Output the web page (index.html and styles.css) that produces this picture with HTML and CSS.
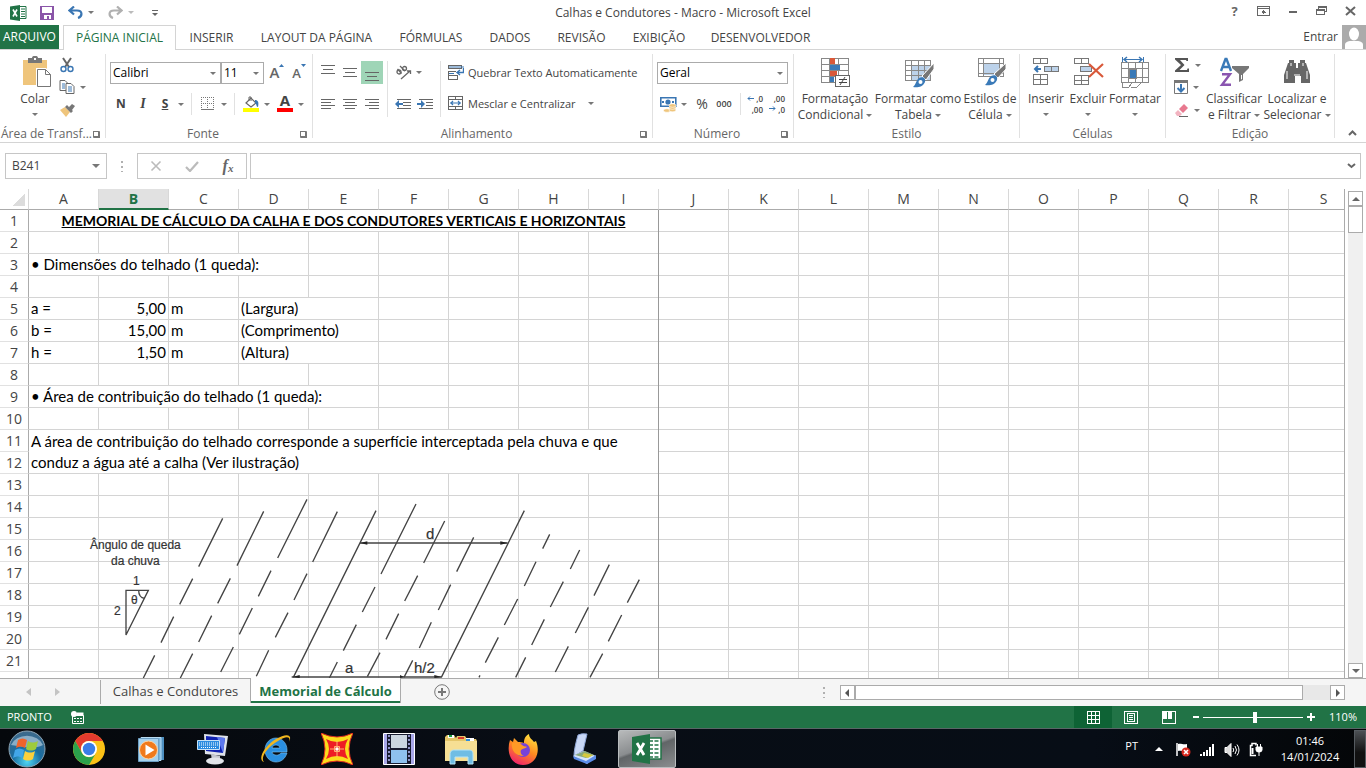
FILE: index.html
```html
<!DOCTYPE html>
<html lang="pt-BR">
<head>
<meta charset="utf-8">
<title>Calhas e Condutores - Macro - Microsoft Excel</title>
<link rel="stylesheet" href="styles.css">
</head>
<body>
<div class="app">
<header class="titlebar">
  <div class="quick">
    <svg class="q-logo" width="18" height="16" viewBox="0 0 18 16"><path d="M9 1.500h7v12H9z" fill="#fff" stroke="#217346"/><path d="M11 4h4M11 6.500h4M11 9h4M11 11.500h4" stroke="#217346"/><path d="M0 1.500L10 0v16L0 14.500z" fill="#217346"/><path d="M3 4.500l4 7M7 4.500l-4 7" stroke="#fff" stroke-width="1.600"/></svg>
    <button class="q-btn" aria-label="Salvar"><svg width="14" height="14" viewBox="0 0 14 14" shape-rendering="crispEdges"><path d="M0 0h14v14H0z" fill="#8a55a8"/><path d="M3 1h9v6H2V1zM4 9h7v4H9v-3H7v3H4z" fill="#fff"/></svg></button>
    <button class="q-btn wide" aria-label="Desfazer"><svg width="15" height="13" viewBox="0 0 15 13" fill="none" stroke="#3a76b3" stroke-width="2.200"><path d="M6 0.500L1.500 4.500L6 8.500M2 4.500h7c6 0 5.500 6 1 7.500"/></svg><i class="caret"></i></button>
    <button class="q-btn wide" aria-label="Refazer"><svg width="15" height="13" viewBox="0 0 15 13" fill="none" stroke="#b0b0b0" stroke-width="2.200"><path d="M9 0.500L13.500 4.500L9 8.500M13 4.500H6c-6 0-5.500 6-1 7.500"/></svg><i class="caret pale"></i></button>
    <button class="q-btn" aria-label="Personalizar"><i class="bar-caret"></i></button>
  </div>
  <h1 class="title">Calhas e Condutores - Macro - Microsoft Excel</h1>
  <div class="winbtns">
    <button class="help" aria-label="Ajuda">?</button>
    <button aria-label="Opções da faixa"><svg width="13" height="10" viewBox="0 0 13 10" fill="none" stroke="#666" shape-rendering="crispEdges"><path d="M.5.5h12v9H.5zM.5 2.500h12M6.500 4v4M4.500 6h1v-1h2v1h1"/></svg></button>
    <button aria-label="Minimizar"><svg width="10" height="10"><path d="M1 5h8v2H1z" fill="#666"/></svg></button>
    <button aria-label="Restaurar"><svg width="11" height="10" viewBox="0 0 11 10" fill="none" stroke="#666" shape-rendering="crispEdges"><path d="M2.500 3V.5h8v5H8.500M2.500 1.500h8M.5 3.500h8v5h-8zM.5 4.500h8"/></svg></button>
    <button aria-label="Fechar"><svg width="11" height="10" viewBox="0 0 11 10"><path d="M1 1l9 8M10 1L1 9" stroke="#666" stroke-width="2"/></svg></button>
  </div>
</header>

<div class="tabs-row">
  <nav class="tabs">
    <button class="file">ARQUIVO</button>
    <button class="on">PÁGINA INICIAL</button>
    <button>INSERIR</button>
    <button>LAYOUT DA PÁGINA</button>
    <button>FÓRMULAS</button>
    <button>DADOS</button>
    <button>REVISÃO</button>
    <button>EXIBIÇÃO</button>
    <button>DESENVOLVEDOR</button>
  </nav>
  <a class="signin" href="#">Entrar</a>
  <svg class="avatar" width="24" height="24" viewBox="0 0 24 24"><path d="M0 0h24v24H0z" fill="#ababab"/><ellipse cx="12" cy="9" rx="5" ry="6.500" fill="#fff"/><path d="M3 24v-4c0-3 3-4 6-4h6c3 0 6 1 6 4v4z" fill="#fff"/></svg>
</div>

<section class="ribbon">
  <div class="group g-clip">
    <div class="body">
      <button class="big"><svg width="32" height="32" viewBox="0 0 32 32"><path d="M4 4h24v25H4z" fill="#efc57c"/><path d="M9 2h4c0-3 6-3 6 0h4v5H9z" fill="#777"/><path d="M15 2h2v2h-2z" fill="#fff"/><path d="M17 12h10l5 5v15H17z" fill="#fff"/><path d="M18.500 13.500h8l5 5v12h-13zM26.500 13.500v5h5" fill="#fff" stroke="#777"/></svg><span>Colar</span><i class="caret"></i></button>
      <div class="stack">
        <button aria-label="Recortar"><svg width="16" height="16" viewBox="0 0 16 16" fill="none"><path d="M4 1l6 9M12 1L6 10" stroke="#666" stroke-width="2"/><circle cx="4.500" cy="12" r="2.500" stroke="#3a76b3" stroke-width="1.400"/><circle cx="11.500" cy="12" r="2.500" stroke="#3a76b3" stroke-width="1.400"/></svg></button>
        <button aria-label="Copiar"><svg width="16" height="14" viewBox="0 0 16 14"><path d="M1 .5h5l3 3v7H1z" fill="#fff" stroke="#666"/><path d="M7 3.500h5l3 3v7H7z" fill="#fff" stroke="#666"/><path d="M3 4h3M3 6h3M3 8h3M9 7h4M9 9h4M9 11h4" stroke="#3a76b3"/></svg><i class="caret"></i></button>
        <button aria-label="Pincel"><svg width="16" height="15" viewBox="0 0 16 15"><path d="M1 7l5-3 5 5-4 5z" fill="#efc57c"/><path d="M6 4l2-2 6 6-2 2zM10 4l3-3 3 2-3 4z" fill="#777"/></svg></button>
      </div>
    </div>
    <div class="cap"><span>Área de Transf...</span><button class="launch" aria-label="Mais"></button></div>
  </div>

  <div class="group g-font">
    <div class="body rows">
      <div class="row">
        <label class="combo c-font"><select aria-label="Fonte"><option>Calibri</option></select></label>
        <label class="combo c-size"><select aria-label="Tamanho"><option>11</option></select></label>
        <button class="ib grow-a" aria-label="Aumentar fonte"><span class="ga">A</span><svg width="5" height="3"><path d="M0 3l2.500-3L5 3z" fill="#3a76b3"/></svg></button>
        <button class="ib grow-a" aria-label="Diminuir fonte"><span class="gs">A</span><svg width="5" height="3"><path d="M0 0h5L2.500 3z" fill="#3a76b3"/></svg></button>
      </div>
      <div class="row r2">
        <button class="ib bold">N</button><button class="ib ital">I</button><button class="ib und">S</button><button class="dd" aria-label="Mais"><i class="caret"></i></button>
        <i class="vs"></i>
        <button class="ib" aria-label="Bordas"><svg width="14" height="14" viewBox="0 0 14 14" stroke="#777" shape-rendering="crispEdges"><path d="M.5 0v12M6.500 0v12M12.500 0v12M0 .5h13M0 6.500h13" stroke-dasharray="1 1"/><path d="M0 12.500h13"/></svg></button><button class="dd" aria-label="Mais"><i class="caret"></i></button>
        <i class="vs"></i>
        <button class="ib" aria-label="Preenchimento"><svg width="17" height="16" viewBox="0 0 17 16"><path d="M3 7l5-5 5 5-5 4z" fill="#fff" stroke="#666" stroke-width="1.200"/><path d="M6 5V1h2v4" fill="none" stroke="#666"/><path d="M12 4c3 0 4 2 3 7-2 0-1-3-3-4z" fill="#3a76b3"/><path d="M0 12h16v4H0z" fill="#ff0"/></svg></button><button class="dd" aria-label="Mais"><i class="caret"></i></button>
        <button class="ib fc" aria-label="Cor da fonte"><span>A</span></button><button class="dd" aria-label="Mais"><i class="caret"></i></button>
      </div>
    </div>
    <div class="cap"><span>Fonte</span><button class="launch" aria-label="Mais"></button></div>
  </div>

  <div class="group g-align">
    <div class="body aligns">
      <div class="a3">
        <button class="ib" aria-label="Superior"><svg class="ln" width="14" height="19"><path d="M0 2.500h14M2 6.500h10M0 10.500h14"/></svg></button>
        <button class="ib" aria-label="Meio"><svg class="ln" width="14" height="19"><path d="M0 5.500h14M2 9.500h10M0 13.500h14"/></svg></button>
        <button class="ib sel" aria-label="Inferior"><svg class="ln" width="14" height="19"><path d="M0 9.500h14M2 13.500h10M0 17.500h14"/></svg></button>
        <button class="ib" aria-label="Esquerda"><svg class="ln" width="14" height="11"><path d="M0 1.500h14M0 4.500h10M0 7.500h14M0 10.500h10"/></svg></button>
        <button class="ib" aria-label="Centro"><svg class="ln" width="14" height="11"><path d="M0 1.500h14M2 4.500h10M0 7.500h14M2 10.500h10"/></svg></button>
        <button class="ib" aria-label="Direita"><svg class="ln" width="14" height="11"><path d="M0 1.500h14M4 4.500h10M0 7.500h14M4 10.500h10"/></svg></button>
      </div>
      <i class="vs tall"></i>
      <div class="a2">
        <button class="ib" aria-label="Orientação"><svg width="17" height="15" viewBox="0 0 17 15" fill="none" stroke="#666" stroke-width="1.300"><circle cx="4" cy="7" r="2"/><path d="M2.500 4l4 4.500"/><path d="M5 1l5 5"/><circle cx="9.500" cy="3.500" r="2"/><path d="M6 14l9-8M12 6h3.500v3"/></svg></button>
        <button class="dd" aria-label="Mais"><i class="caret"></i></button>
        <button class="ib" aria-label="Diminuir recuo"><svg width="16" height="11" viewBox="0 0 16 11"><path d="M2 1.500h14M8 4.500h8M8 7.500h8M2 10.500h14" stroke="#666" shape-rendering="crispEdges"/><path d="M0 6l4-4v3h4v2H4v3z" fill="#3a76b3"/></svg></button>
        <button class="ib" aria-label="Aumentar recuo"><svg width="16" height="11" viewBox="0 0 16 11"><path d="M2 1.500h14M9 4.500h7M9 7.500h7M2 10.500h14" stroke="#666" shape-rendering="crispEdges"/><path d="M8 6L4 2v3H0v2h4v3z" fill="#3a76b3"/></svg></button>
      </div>
      <i class="vs tall"></i>
      <div class="a1">
        <button class="tb"><svg width="16" height="15" viewBox="0 0 16 15" fill="none"><path d="M.5.5h13v3H.5zM.5 6.500h7M.5 14v-3.500h9V14zM.5 10v-4" stroke="#666" shape-rendering="crispEdges"/><path d="M1 2h15M1 8.500h5" stroke="#3a76b3"/><path d="M15.500 3v4.500H10M12 5l-3 2.500 3 2.500" stroke="#3a76b3" stroke-width="1.400"/></svg>Quebrar Texto Automaticamente</button>
        <button class="tb"><svg width="16" height="15" viewBox="0 0 16 15" fill="none"><path d="M.5.5h14v13H.5zM.5 3.500h14M.5 10.500h14M7.500 0v3M7.500 11v3" stroke="#666" shape-rendering="crispEdges"/><path d="M2 7h11M5 5L3 7l2 2M10 5l2 2-2 2" stroke="#3a76b3" stroke-width="1.200"/></svg>Mesclar e Centralizar<i class="caret far"></i></button>
      </div>
    </div>
    <div class="cap"><span>Alinhamento</span><button class="launch" aria-label="Mais"></button></div>
  </div>

  <div class="group g-num">
    <div class="body rows">
      <div class="row"><label class="combo c-num"><select aria-label="Formato de número"><option>Geral</option></select></label></div>
      <div class="row r2">
        <button class="ib" aria-label="Moeda"><svg width="17" height="17" viewBox="0 0 17 17"><path d="M.8 1.800h15v8.400H.8z" fill="#fff" stroke="#3a76b3" stroke-width="1.600"/><circle cx="8" cy="6" r="2.600" fill="#3a76b3"/><path d="M2 5h2v2H2zM12 5h2v2h-2z" fill="#3a76b3"/><g fill="#efc57c" stroke="#fff" stroke-width=".6"><ellipse cx="7" cy="14.500" rx="3.500" ry="1.800"/><ellipse cx="12.500" cy="14" rx="3.500" ry="1.800"/><ellipse cx="12.500" cy="11.500" rx="3.500" ry="1.800"/><ellipse cx="12.500" cy="9.500" rx="3.500" ry="1.800"/></g></svg></button>
        <button class="dd" aria-label="Mais"><i class="caret"></i></button>
        <button class="ib pct">%</button><button class="ib mil">000</button>
        <i class="vs"></i>
        <button class="ib dec" aria-label="Aumentar casas"><span>,0</span><span>,00</span><svg width="7" height="5"><path d="M7 2.500H1M3 .5l-2 2 2 2" fill="none" stroke="#3a76b3"/></svg></button>
        <button class="ib dec d2" aria-label="Diminuir casas"><span>,00</span><span>,0</span><svg width="7" height="5"><path d="M0 2.500h6M4 .5l2 2-2 2" fill="none" stroke="#3a76b3"/></svg></button>
      </div>
    </div>
    <div class="cap"><span>Número</span><button class="launch" aria-label="Mais"></button></div>
  </div>

  <div class="group g-style">
    <div class="body">
      <button class="big"><svg width="32" height="32" viewBox="0 0 32 32" shape-rendering="crispEdges"><path d="M2.500 2.500h27v24h-27zM10.500 2v24M19.500 2v24M2 8.500h27M2 14.500h27M2 20.500h27" fill="#fff" stroke="#888"/><path d="M11 2h5v6h-5zM11 15h7v5h-7z" fill="#d9593a"/><path d="M11 9h10v5H11zM11 21h4v5h-4z" fill="#3a7ab8"/><path d="M16.500 19.500h14v11h-14z" fill="#fff" stroke="#666"/><path d="M20 23.500h8M20 26.500h8M21 29l5-8" stroke="#444" shape-rendering="auto"/></svg><span>Formatação<br>Condicional <i class="caret"></i></span></button>
      <button class="big"><svg width="32" height="32" viewBox="0 0 32 32"><path d="M3.500 4.500h25v20h-25z" fill="#fff"/><path d="M9 9h19v15H9z" fill="#bcd2ea"/><path d="M3.500 4.500h25v20h-25zM9.500 4v20M16.500 4v20M22.500 4v20M3 9.500h25M3 14.500h25M3 19.500h25" fill="none" stroke="#888" shape-rendering="crispEdges"/><path d="M32 7L20 20l4 4 8-11z" fill="#777" stroke="#fff"/><path d="M17 22c4-2 7 0 6 4-2 5-8 6-12 5 3-2 3-7 6-9z" fill="#3a7ab8"/><circle cx="18.500" cy="26" r="2" fill="#fff"/></svg><span>Formatar como<br>Tabela <i class="caret"></i></span></button>
      <button class="big"><svg width="32" height="32" viewBox="0 0 32 32"><path d="M4 2.500h25v18H4z" fill="#fff"/><path d="M9 8h16v11H9z" fill="#bcd2ea"/><path d="M4.500 2.500h25v18h-25zM9.500 2v18M25.500 2v18M4 7.500h25M4 17.500h25" fill="none" stroke="#888" shape-rendering="crispEdges"/><path d="M32 7L20 18l4 4 8-9z" fill="#777" stroke="#fff"/><path d="M17 20c4-2 7 0 6 4-2 5-8 6-12 5 3-2 3-7 6-9z" fill="#3a7ab8"/><circle cx="18.500" cy="24" r="2" fill="#fff"/></svg><span>Estilos de<br>Célula <i class="caret"></i></span></button>
    </div>
    <div class="cap"><span>Estilo</span></div>
  </div>

  <div class="group g-cells">
    <div class="body">
      <button class="big"><svg width="32" height="32" viewBox="0 0 32 32" fill="none" stroke="#777" shape-rendering="crispEdges"><path d="M3.500 2.500h14v5h-14zM10.500 2v5M3.500 18.500h14v10h-14zM10.500 18v10M3 23.500h14"/><path d="M14.500 10.500h14v5h-14z" fill="#bcd2ea"/><path d="M21.500 10v5"/><path d="M11 13H5M8 10l-3 3 3 3" stroke="#3a76b3" stroke-width="2" shape-rendering="auto"/></svg><span>Inserir</span><i class="caret"></i></button>
      <button class="big"><svg width="32" height="32" viewBox="0 0 32 32" fill="none" stroke="#777" shape-rendering="crispEdges"><path d="M2.500 2.500h14v5h-14zM9.500 2v5M2.500 19.500h14v9h-14zM9.500 19v9M2 24.500h14"/><path d="M8.500 10.500h11v5h-11z" fill="#bcd2ea"/><path d="M17 8l14 13M31 8L17 21" stroke="#d9593a" stroke-width="2.200" shape-rendering="auto"/></svg><span>Excluir</span><i class="caret"></i></button>
      <button class="big"><svg width="32" height="32" viewBox="0 0 32 32" fill="none" stroke="#888" shape-rendering="crispEdges"><path d="M2.500 6.500h27v20h-27zM9.500 6v20M16.500 6v20M23.500 6v20M2 12.500h27M2 21.500h27"/><path d="M3 27v4h7l3-4M12 31h6l4-4"/><path d="M10 13h7v9h-7z" fill="#3a7ab8"/><path d="M3.500 1v5M24.500 1v5M5 3.500h18" stroke="#3a76b3"/><path d="M8 1L5 3.500 8 6M20 1l3 2.500L20 6" stroke="#3a76b3" stroke-width="1.500" shape-rendering="auto"/></svg><span>Formatar</span><i class="caret"></i></button>
    </div>
    <div class="cap"><span>Células</span></div>
  </div>

  <div class="group g-edit">
    <div class="body">
      <div class="stack">
        <button aria-label="Soma"><svg width="16" height="16" viewBox="0 0 16 16"><path d="M1 1h13v3h-1.500l-.5-1H6l4.500 5L5.500 13H13l.5-1.500H15V15H1v-1.500L7 8 1 2.500z" fill="#555"/></svg><i class="caret"></i></button>
        <button aria-label="Preencher"><svg width="14" height="16" viewBox="0 0 14 16"><path d="M.5 1.500h13v13H.5z" fill="#fff" stroke="#777"/><path d="M0 1h14v3H0z" fill="#777"/><path d="M7 5v7M3.500 9L7 12.500 10.500 9" fill="none" stroke="#3a76b3" stroke-width="2"/></svg><i class="caret"></i></button>
        <button aria-label="Limpar"><svg width="15" height="14" viewBox="0 0 15 14"><path d="M5 6l5-5 4 4-5 5z" fill="#e8798f"/><path d="M1 10l3-3 4 4-2 2H3z" fill="#f2b3c0"/><path d="M5 13.500h9" stroke="#666"/></svg><i class="caret"></i></button>
      </div>
      <button class="big"><svg width="32" height="32" viewBox="0 0 32 32"><path d="M3 15L7.500 3h1L13 15M5 11h6" fill="none" stroke="#3a7ab8" stroke-width="2.400"/><path d="M4 18.200h8L4 28.800h9" fill="none" stroke="#8a55b0" stroke-width="2.400"/><path d="M14 10h17v2l-6 6v6l-4 2v-8l-7-6z" fill="#777"/><path d="M23 19h1v4l-1 .5z" fill="#fff"/></svg><span>Classificar<br>e Filtrar <i class="caret"></i></span></button>
      <button class="big"><svg width="32" height="32" viewBox="0 0 32 32"><path d="M8 4h5v3h2v5h2V7h2V4h5v3h1l2 6 2 6v8h-9v-7h-6v7H3v-8l2-6 2-6h1z" fill="#666"/><path d="M6 15v8M26 15v8M10 7v3M22 7v3M13 19h6" stroke="#fff"/></svg><span>Localizar e<br>Selecionar <i class="caret"></i></span></button>
    </div>
    <div class="cap"><span>Edição</span></div>
  </div>
  <button class="collapse" aria-label="Recolher"><svg width="9" height="6"><path d="M1 5l3.500-3.500L8 5" fill="none" stroke="#666" stroke-width="2"/></svg></button>
</section>

<div class="fbar">
  <div class="namebox"><input aria-label="Caixa de nome" value="B241"><button aria-label="Nomes"><i class="caret big-c"></i></button></div>
  <i class="dots"></i>
  <div class="fx">
    <button aria-label="Cancelar"><svg width="12" height="12"><path d="M1.500 1.500l9 9M10.500 1.500l-9 9" stroke="#bbb" stroke-width="1.600"/></svg></button>
    <button aria-label="Inserir"><svg width="14" height="11"><path d="M1 6l4 4 8-9" fill="none" stroke="#bbb" stroke-width="2.200"/></svg></button>
    <button class="fxb" aria-label="Inserir função">f<small>x</small></button>
  </div>
  <div class="formula"><input aria-label="Barra de fórmulas"><button aria-label="Expandir"><svg width="9" height="6"><path d="M1 1l3.500 3L8 1" fill="none" stroke="#666" stroke-width="2"/></svg></button></div>
</div>

<main class="sheet">
  <div class="grid-wrap">
    <table class="grid">
      <colgroup><col class="ch"><col span="19"></colgroup>
      <thead><tr><th class="corner"></th><th>A</th><th class="cur">B</th><th>C</th><th>D</th><th>E</th><th>F</th><th>G</th><th>H</th><th>I</th><th>J</th><th>K</th><th>L</th><th>M</th><th>N</th><th>O</th><th>P</th><th>Q</th><th>R</th><th>S</th></tr></thead>
      <tbody>
        <tr><th>1</th><td class="c head" colspan="9">MEMORIAL DE CÁLCULO DA CALHA E DOS CONDUTORES VERTICAIS E HORIZONTAIS</td><td colspan="10"></td></tr>
        <tr><th>2</th><td colspan="19"></td></tr>
        <tr><th>3</th><td class="c" colspan="4">• Dimensões do telhado (1 queda):</td><td colspan="15"></td></tr>
        <tr><th>4</th><td colspan="19"></td></tr>
        <tr><th>5</th><td class="c">a =</td><td class="c num">5,00</td><td class="c">m</td><td class="c" colspan="2">(Largura)</td><td colspan="14"></td></tr>
        <tr><th>6</th><td class="c">b =</td><td class="c num">15,00</td><td class="c">m</td><td class="c" colspan="2">(Comprimento)</td><td colspan="14"></td></tr>
        <tr><th>7</th><td class="c">h =</td><td class="c num">1,50</td><td class="c">m</td><td class="c" colspan="2">(Altura)</td><td colspan="14"></td></tr>
        <tr><th>8</th><td colspan="19"></td></tr>
        <tr><th>9</th><td class="c" colspan="5">• Área de contribuição do telhado (1 queda):</td><td colspan="14"></td></tr>
        <tr><th>10</th><td colspan="19"></td></tr>
        <tr><th>11</th><td class="c" colspan="9" rowspan="2">A área de contribuição do telhado corresponde a superfície interceptada pela chuva e que<br>conduz a água até a calha (Ver ilustração)</td><td colspan="10"></td></tr>
        <tr><th>12</th><td colspan="10"></td></tr>
        <tr><th>13</th><td colspan="19"></td></tr>
        <tr><th>14</th><td colspan="19"></td></tr>
        <tr><th>15</th><td colspan="19"></td></tr>
        <tr><th>16</th><td colspan="19"></td></tr>
        <tr><th>17</th><td colspan="19"></td></tr>
        <tr><th>18</th><td colspan="19"></td></tr>
        <tr><th>19</th><td colspan="19"></td></tr>
        <tr><th>20</th><td colspan="19"></td></tr>
        <tr><th>21</th><td colspan="19"></td></tr>
        <tr><th>22</th><td colspan="19"></td></tr>
      </tbody>
    </table>
    <i class="page-break"></i>
    <svg class="rain" width="610" height="198" viewBox="0 0 610 198">
      <g transform="scale(.33333)" fill="none" stroke="#444" stroke-width="4">
        <path d="M488 115L416 260M611 94L531 257M741 58L653 234M832 95L758 246M948 92L700 592M398 296L359 373M511 295L473 370M633 272L595 349M741 281L702 360M341 410L303 488M455 407L416 486M577 384L538 463M684 398L646 472M284 526L250 594M398 521L361 594M520 501L482 576M626 511L589 589M945 321L907 396M889 434L850 512M832 546L808 594M960 518L922 590"/>
        <path transform="translate(900 0)" d="M168 72L63 282M254 123L191 249M341 172L290 275M493 92L244 592M173 287L134 363M272 314L235 390M116 401L78 478M214 427L178 504M158 541L132 592M569 163L548 206M528 245L493 318M473 357L433 435M415 472L376 548M360 586L357 592M659 210L631 267M610 305L571 381M553 418L515 495M497 532L467 592M748 254L702 347M685 382L646 459M625 499L586 576M838 299L802 368M785 405L745 484M728 521L690 592"/>
        <path d="M900 189h443M695 591h450"/>
        <path d="M198 331h67L198 465zM236 331c0 14 6 23 18 24"/>
        <g fill="#222" stroke="none"><path d="M900 189l22-5v10zM1343 189l-22-5v10zM697 591l22-6v9zM1145 591l-22-6v9zM1032 591l-12-6v9z"/></g>
      </g>
      <g class="rt">
        <text x="30" y="69">Ângulo de queda</text>
        <text x="51" y="85">da chuva</text>
        <text x="73" y="105">1</text>
        <text x="54" y="135">2</text>
        <text x="71" y="124">θ</text>
        <g class="rt-l"><text x="285" y="193">a</text><text x="366" y="59">d</text><text x="354" y="193">h/2</text></g>
      </g>
    </svg>
  </div>
  <div class="vscroll">
    <button aria-label="Para cima"><svg width="8" height="4"><path d="M0 4l4-4 4 4z" fill="#666"/></svg></button>
    <div class="vthumb"></div>
    <div class="vtrack"></div>
    <button aria-label="Para baixo"><svg width="8" height="4"><path d="M0 0h8L4 4z" fill="#666"/></svg></button>
  </div>
</main>

<div class="sheetbar">
  <div class="navs">
    <button aria-label="Anterior"><svg width="5" height="8"><path d="M5 0v8L0 4z" fill="#c4c4c4"/></svg></button>
    <button aria-label="Próxima"><svg width="5" height="8"><path d="M0 0v8l5-4z" fill="#c4c4c4"/></svg></button>
  </div>
  <button class="stab">Calhas e Condutores</button>
  <button class="stab on">Memorial de Cálculo</button>
  <button class="add" aria-label="Nova planilha"><svg width="16" height="16" fill="none" stroke="#777"><circle cx="8" cy="8" r="7.300"/><path d="M4 8h8M8 4v8" stroke-width="2"/></svg></button>
  <i class="dots hd"></i>
  <div class="hscroll">
    <button aria-label="Esquerda"><svg width="4" height="8"><path d="M4 0v8L0 4z" fill="#555"/></svg></button>
    <div class="hthumb"></div><div class="htrack"></div>
    <button aria-label="Direita"><svg width="4" height="8"><path d="M0 0v8l4-4z" fill="#555"/></svg></button>
  </div>
</div>

<footer class="status">
  <span class="ready">PRONTO</span>
  <svg width="13" height="13" viewBox="0 0 13 13"><path d="M1.500 4.500h11v8h-11z" fill="none" stroke="#fff"/><path d="M6 1.500h6.500V5H6z" fill="#fff"/><path d="M3 7.500h8M3 10.500h8" stroke="#fff" stroke-dasharray="2 1"/><circle cx="3" cy="3" r="3" fill="#fff"/></svg>
  <div class="views">
    <button class="on" aria-label="Normal"><svg width="13" height="13" fill="none" stroke="#fff" shape-rendering="crispEdges"><path d="M.5.5h12v12H.5zM4.500 0v13M8.500 0v13M0 4.500h13M0 8.500h13"/></svg></button>
    <button aria-label="Layout da página"><svg width="14" height="13" fill="none" stroke="#fff" shape-rendering="crispEdges"><path d="M.5.5h13v12H.5zM3.500 2.500h7v8h-7zM5 4.500h4M5 6.500h4M5 8.500h4"/></svg></button>
    <button aria-label="Quebra de página"><svg width="14" height="13" shape-rendering="crispEdges"><path d="M.5.5h13v12H.5z" fill="none" stroke="#fff"/><path d="M1 1h4v7H1zM6 1h4v7H6z" fill="#fff"/></svg></button>
  </div>
  <div class="zoom">
    <button class="zm" aria-label="Menos zoom"></button>
    <input type="range" min="0" max="100" value="52" aria-label="Zoom">
    <button class="zm plus" aria-label="Mais zoom"></button>
    <span class="pc">110%</span>
  </div>
</footer>

<div class="taskbar">
  <div class="apps">
    <button aria-label="Iniciar"><svg width="40" height="38" viewBox="0 0 40 38"><defs><radialGradient id="orb" cx=".5" cy=".85" r=".8"><stop offset="0" stop-color="#4fd6f4"/><stop offset=".5" stop-color="#1a6da0"/><stop offset="1" stop-color="#3c6a8c"/></radialGradient></defs><circle cx="20" cy="19" r="18" fill="url(#orb)" stroke="#8fa6b5"/><path d="M4 15a17 14 0 0 1 32 0c-10 5-22 1-32 0z" fill="#d5e4ee" opacity=".55"/><path d="M11 10c3-2 6-2 9 0l-2 8c-3-2-6-2-9 0z" fill="#f0642b"/><path d="M21 11c3 2 6 2 10 0l-2 8c-3 2-7 2-10 0z" fill="#9ecb3c"/><path d="M8 20c3-2 6-2 9 0l-2 8c-3-2-5-2-9 0z" fill="#42a6e8"/><path d="M18 21c3 2 7 2 10 0l-2 8c-3 2-7 2-10 0z" fill="#fcd03c"/></svg></button>
    <button aria-label="Chrome"><svg width="32" height="32" viewBox="0 0 32 32"><circle cx="16" cy="16" r="16" fill="#fbc116"/><path d="M2.200 8A16 16 0 0 1 29.800 8H16a8 8 0 0 0-7 12z" fill="#e33b2e"/><path d="M2.200 8A16 16 0 0 0 16 32l7-12a8 8 0 0 1-14 0z" fill="#2ba24c"/><circle cx="16" cy="16" r="8" fill="#fff"/><circle cx="16" cy="16" r="6.200" fill="#3a7de8"/></svg></button>
    <button aria-label="Media Player"><svg width="32" height="32" viewBox="0 0 32 32"><path d="M9 4h20v23H9z" fill="#4d8fc0"/><path d="M6 4.500h20v23H6z" fill="#78b4dc" stroke="#b8dcf2"/><path d="M3.500 5.500h20v23h-20z" fill="#a6d2ee" stroke="#6c9fc4"/><circle cx="13.500" cy="17" r="9" fill="#f07a1c" stroke="#ffd2a0"/><path d="M10.500 11.500v11l9-5.500z" fill="#fff"/></svg></button>
    <button aria-label="Teclado virtual"><svg width="32" height="32" viewBox="0 0 32 32"><path d="M7 1l24 2-3 20-20-2z" fill="#dfe3ea"/><path d="M9 3l19 2-2 15-17-2z" fill="#1022b0"/><path d="M20 4l8 1-2 15z" fill="#5c78ef"/><path d="M14 21l9 2v5h-8z" fill="#c4c8d0"/><ellipse cx="18" cy="28" rx="9" ry="3.500" fill="#e2e5ea"/><path d="M.5 7.500h22v9H.5z" fill="#2a8ce0" stroke="#c6e2f8"/><path d="M2 10h19M2 12h19M4 14.500h15" stroke="#fff" stroke-dasharray="1 1"/></svg></button>
    <button aria-label="Internet Explorer"><svg width="32" height="32" viewBox="0 0 32 32"><path d="M6 17c0-7 5-12 11-12s11 5 11 12v2H13c1 4 7 4 9 1h6c-2 6-6 9-11 9C11 29 6 24 6 17zm7-2h8c-1-4-7-4-8 0z" fill="#2a8fe0" stroke="#7cc4f4" stroke-width=".6"/><path d="M5 29C-2 27 5 13 17 6 27 0 34 1 30 9c2-6-3-6-11-1C8 14 1 25 5 29z" fill="#f2b71f"/></svg></button>
    <button aria-label="Estrela"><svg width="32" height="32" viewBox="0 0 32 32"><path d="M0 0q16 8 32 0-8 16 0 32-16-8-32 0Q8 16 0 0z" fill="#fbdc1c" stroke="#e22c22"/><path d="M5 6q11 6 22 0-6 10 0 20-11-6-22 0Q11 16 5 6z" fill="#ee1c24"/><path d="M16 8v16M9 16h14M13.500 13.500h5v5h-5z" stroke="#ffb070" stroke-width="1" fill="none"/><path d="M14.500 14.500h3v3h-3z" fill="#fff"/></svg></button>
    <button aria-label="Vídeo"><svg width="32" height="32" viewBox="0 0 32 32"><path d="M.5.5h31v31H.5z" fill="#a9a8ea" stroke="#fff"/><path d="M4 1h24v30H4z" fill="#181c30"/><path d="M8 2h16v13H8z" fill="#cbd6e0"/><path d="M8 17h16v13H8z" fill="#8fc1ee"/><path d="M6 2v28M26 2v28" stroke="#8f93c8" stroke-width="2" stroke-dasharray="2 2"/></svg></button>
    <button aria-label="Explorador"><svg width="34" height="32" viewBox="0 0 34 32"><path d="M1 4l2-2h7l2 3 1-2h8l2 3h9l1 2v20H1z" fill="#e5c669"/><path d="M4 2h6v3H4z" fill="#fff"/><path d="M5 2h3v2H5z" fill="#18a040"/><path d="M14 4h6v2h-6z" fill="#d83a2c"/><path d="M22 5h8v3h-8z" fill="#fff"/><path d="M22 6h4v2h-4z" fill="#2e8fe0"/><path d="M1 8h32v20H1z" fill="#f6df94"/><path d="M6 31v-9c0-5 3-5 5-5h13c4 0 5 1 5 5v9h-5v-7H11v7z" fill="#70bde4" stroke="#b5e4f8"/></svg></button>
    <button aria-label="Firefox"><svg width="32" height="32" viewBox="0 0 32 32"><defs><linearGradient id="ff" x1=".8" y1="0" x2=".3" y2="1"><stop offset="0" stop-color="#ffe640"/><stop offset=".5" stop-color="#ff8a20"/><stop offset="1" stop-color="#f0206c"/></linearGradient></defs><path d="M3 7l3 2 1-4 4 4c2 0 4 0 6 1 0-4 1-7 5-9 0 4 3 5 5 8l2-1c5 12-1 24-13 24S-1 19 3 7z" fill="url(#ff)"/><circle cx="16" cy="17" r="7" fill="#7742d8"/><path d="M5 10c4 0 7-1 10 2 2 2 4 1 5 2-2 2-4 1-6 3-1 2 0 5 3 6-9 0-13-6-12-13z" fill="#ff9a26"/></svg></button>
    <button aria-label="Scanner"><svg width="32" height="32" viewBox="0 0 32 32"><path d="M9 2q4-2 9-1l-4 17-9 5Q5 16 9 2z" fill="#c9d8f6" stroke="#90a8d8"/><path d="M4 23l11-5 12 5-9 8z" fill="#d5e4fb"/><path d="M6 22l10-4 9 4-8 3z" fill="#88a878"/><path d="M15 20l9 2-5 3-6-2z" fill="#d5c83e"/><path d="M4 23l13 5 10-6v4l-9 5L5 26z" fill="#5b8ce8"/></svg></button>
    <button class="active" aria-label="Excel"><svg width="32" height="30" viewBox="0 0 32 30"><path d="M16 4h14v21H16z" fill="#fff" stroke="#217346" stroke-width="1.500"/><path d="M18 7h10M18 11h10M18 15h10M18 19h10M18 23h10" stroke="#217346" stroke-width="1.500" stroke-dasharray="4 1.500"/><path d="M1 3l18-3v30L1 27z" fill="#217346"/><path d="M6 9l7 12M13 9L6 21" stroke="#fff" stroke-width="2.800"/></svg></button>
  </div>
  <div class="tray">
    <span class="lang">PT</span>
    <button class="more" aria-label="Mostrar ícones"><svg width="8" height="4"><path d="M0 4l4-4 4 4z" fill="#fff"/></svg></button>
    <svg width="15" height="15" viewBox="0 0 15 15"><path d="M1 1v13" stroke="#fff" stroke-width="1.500"/><path d="M2 2c3-1 5 1 9 0v7c-4 1-6-1-9 0z" fill="#fff"/><circle cx="10" cy="10" r="4.500" fill="#d8281e"/><path d="M8 8l4 4M12 8l-4 4" stroke="#fff" stroke-width="1.600"/></svg>
    <svg width="15" height="12" viewBox="0 0 15 12" fill="#fff" shape-rendering="crispEdges"><path d="M0 10h2v2H0zM3 8h2v4H3zM6 6h2v6H6zM9 3h2v9H9zM12 0h2v12h-2z"/></svg>
    <svg width="16" height="14" viewBox="0 0 16 14" fill="none" stroke="#fff"><path d="M1 4.500h2l4-4v13l-4-4H1z" fill="#ddd"/><path d="M9 5q1.500 2 0 4M11 3q3 4 0 8M13 1.500q4 5.500 0 11"/></svg>
    <svg width="14" height="15" viewBox="0 0 14 15" fill="none" stroke="#fff"><path d="M7 13.500H1.500v-10H3v-2h4v2" stroke-width="1.500"/><path d="M3.500 6v6" stroke-width="2"/><path d="M7 5h6v3q0 2-3 2t-3-2zM8.500 2v3M11.500 2v3M10 10v4" fill="#fff"/></svg>
    <div class="clock"><span>01:46</span><span>14/01/2024</span></div>
    <button class="peek" aria-label="Área de trabalho"></button>
  </div>
</div>
</div>
</body>
</html>
```
FILE: styles.css
```css
* { box-sizing: border-box; }
body { margin: 0; font: 12px/16px "Open Sans", "Noto Sans", sans-serif; color: #444; background: #fff; }
button, input, select { font: inherit; color: inherit; border: 0; background: none; padding: 0; margin: 0; outline: 0; }
button { display: flex; align-items: center; justify-content: center; white-space: nowrap; }
svg { display: block; flex: none; }
.app { height: 100vh; display: flex; flex-direction: column; overflow: hidden; }

.caret { display: inline-block; width: 0; height: 0; border: 3px solid transparent; border-top-color: #777; border-bottom: 0; vertical-align: 2px; flex: none; }
.caret.pale { border-top-color: #bbb; }
.caret.big-c { border-width: 4px 4px 0; }
.caret.far { margin-left: 8px; }
.bar-caret { border-top: 1px solid #666; width: 6px; padding-top: 2px; }
.bar-caret::after { content: ""; display: block; border: 3px solid transparent; border-top-color: #666; border-bottom: 0; }

.titlebar { display: grid; grid-template-columns: 1fr auto 1fr; align-items: center; height: 25px; flex: none; }
.quick { display: flex; align-items: center; padding-left: 10px; height: 22px; }
.q-logo { margin-right: 12px; }
.q-btn { width: 14px; margin-right: 14px; }
.q-btn.wide { width: 26px; gap: 5px; justify-content: flex-start; }
.title { margin: 0; font-size: 12px; font-weight: 400; }
.winbtns { display: flex; justify-content: flex-end; align-items: center; padding-right: 1px; margin-bottom: 3px; }
.winbtns button { width: 29px; height: 22px; }
.help { font-weight: 700; font-size: 13px; color: #666; }

.tabs-row { display: flex; height: 25px; border-bottom: 1px solid #d4d4d4; flex: none; }
.tabs { display: grid; grid-template-columns: 63px 113px 71px 139px 90px 68px 75px 80px 123px; height: 25px; }
.tabs .file { background: #217346; color: #fff; width: 59px; height: 24px; }
.tabs .on { color: #217346; background: #fff; border: 1px solid #d4d4d4; border-bottom: 0; }
.signin { margin-left: auto; color: #444; text-decoration: none; line-height: 24px; padding-right: 4px; }

.ribbon { display: flex; height: 93px; border-bottom: 1px solid #d4d4d4; flex: none; }
.group { display: flex; flex-direction: column; flex: none; border-right: 1px solid #e1e1e1; margin: 4px 0; }
.g-clip { width: 106px; } .g-font { width: 207px; } .g-align { width: 340px; } .g-num { width: 141px; }
.g-style { width: 226px; } .g-cells { width: 146px; } .g-edit { width: 169px; }
.body { flex: 1; display: grid; align-items: start; min-height: 0; }
.cap { height: 16px; display: grid; grid-template-columns: 1fr 12px; margin-bottom: -4px; text-align: center; color: #666; white-space: nowrap; }
.g-style .cap, .g-cells .cap, .g-edit .cap { grid-template-columns: 1fr; }
.launch { width: 7px; height: 7px; border: 1px solid #777; border-right-color: #bbb; border-bottom-color: #bbb; align-self: center; position: relative; }
.launch::after { content: ""; position: absolute; right: -1px; bottom: -1px; width: 4px; height: 4px; border: 1px solid #777; border-width: 0 2px 2px 0; }
.big { flex-direction: column; padding-top: 2px; line-height: 16px; justify-content: flex-start; }
.big > span { margin-top: 3px; }
.big > .caret { margin-top: 6px; }
.g-clip .body { grid-template-columns: 42px 36px; padding-left: 14px; }
.stack { display: grid; grid-template-rows: 22px 22px 24px; }
.stack button { justify-content: flex-start; gap: 5px; }
.g-clip .stack { padding-left: 3px; }
.g-style .body { grid-template-columns: 82px 84px 60px; }
.g-cells .body { grid-template-columns: 42px 42px 52px; padding-left: 5px; }
.g-edit .body { grid-template-columns: 36px 60px 66px; padding-left: 2px; }
.g-edit .stack { padding-left: 6px; }
.collapse { margin: auto 0 4px 13px; height: 10px; }

.rows { display: flex; flex-direction: column; align-items: stretch; padding-left: 4px; }
.row { display: flex; align-items: center; height: 22px; margin-top: 8px; }
.row.r2 { margin-top: 9px; }
.combo { display: block; position: relative; border: 1px solid #ababab; height: 22px; color: #000; }
.combo select { appearance: none; width: 100%; height: 20px; padding-left: 2px; }
.combo::after { content: ""; position: absolute; right: 4px; top: 9px; border: 3px solid transparent; border-top-color: #777; border-bottom: 0; pointer-events: none; }
.c-font { width: 111px; } .c-size { width: 43px; } .c-num { width: 131px; }
.ib { width: 22px; height: 22px; flex: none; }
.dd { width: 10px; height: 22px; flex: none; }
.vs { width: 1px; height: 22px; background: #e1e1e1; margin: 0 5px; flex: none; }
.vs.tall { height: 56px; margin: 7px 4px 0; }
.grow-a { align-items: flex-start; padding-left: 4px; }
.ga { font-size: 15px; font-weight: 600; line-height: 20px; color: #666; }
.gs { font-size: 13px; font-weight: 600; line-height: 22px; color: #666; }
.grow-a svg { margin-top: 2px; }
.bold { font-weight: 700; } .ital { font: italic 700 14px "Liberation Serif", serif; } .und { font-weight: 700; text-decoration: underline; }
.fc { align-items: flex-start; margin-left: 2px; }
.fc span { font-weight: 700; font-size: 15px; line-height: 15px; border-bottom: 4px solid red; width: 16px; }
.aligns { display: flex; padding-left: 4px; }
.a3 { display: grid; grid-template-columns: repeat(3, 22px); row-gap: 8px; padding-top: 7px; }
.a2 { display: grid; grid-template-columns: 22px 22px; row-gap: 8px; padding-top: 7px; }
.a3 .ib, .a2 .ib, .a2 .dd { height: 23px; }
.sel { background: #9fd5b7; }
.ln path { stroke: #666; fill: none; shape-rendering: crispEdges; }
.a1 { display: grid; row-gap: 8px; padding: 7px 0 0 3px; }
.tb { height: 23px; gap: 4px; justify-content: flex-start; font-size: 11px; }
.pct { font-size: 14px; margin-left: 2px; } .mil { font-size: 9px; font-weight: 600; }
.dec { position: relative; flex-direction: column; align-items: flex-end; font-size: 8px; font-weight: 600; line-height: 11px; padding-right: 5px; }
.dec svg { position: absolute; left: 1px; top: 3px; }
.dec.d2 svg { top: 13px; }

.fbar { display: flex; align-items: center; height: 46px; padding: 0 5px; flex: none; }
.namebox { display: flex; width: 102px; height: 26px; border: 1px solid #c6c6c6; }
.namebox input { width: 80px; padding-left: 6px; }
.namebox button { width: 20px; }
.dots { width: 2px; height: 11px; margin: 0 14px; background: repeating-linear-gradient(#b0b0b0 0 2px, transparent 2px 5px); }
.fx { display: grid; grid-template-columns: 36px 36px 36px; width: 110px; height: 26px; border: 1px solid #c6c6c6; }
.fxb { font: italic 700 16px "Liberation Serif", serif; color: #666; }
.fxb small { font-size: 11px; margin-top: 4px; }
.formula { flex: 1; display: flex; height: 26px; margin-left: 3px; border: 1px solid #c6c6c6; }
.formula input { flex: 1; }
.formula button { width: 17px; }

.sheet { flex: 1; display: flex; min-height: 0; border-bottom: 1px solid #ababab; }
.grid-wrap { position: relative; flex: 1; overflow: hidden; border-right: 1px solid #ababab; }
.grid { table-layout: fixed; width: 1359px; border-spacing: 0; font: 15px/22px "Lato", sans-serif; color: #000; }
.grid col { width: 70px; }
.grid .ch { width: 29px; }
.grid th { font: 14px/20px "Open Sans", sans-serif; color: #444; padding: 0; text-align: center; }
.grid thead th { height: 21px; border-bottom: 1px solid #ababab; border-right: 1px solid #d8d8d8; }
.grid tbody th { height: 22px; border-right: 1px solid #ababab; border-bottom: 1px solid #e1e1e1; }
.grid .corner { border-right-color: #d8d8d8; background: linear-gradient(135deg, transparent 50%, #dcdcdc 50%) 12px 5px / 13px 12px no-repeat; }
.grid thead .cur { background: #e1e1e1; color: #217346; font-weight: 700; border-bottom: 2px solid #217346; line-height: 18px; }
.grid td { padding: 0; background: linear-gradient(#d4d4d4, #d4d4d4) bottom / 100% 1px no-repeat, repeating-linear-gradient(90deg, transparent 0 69px, #d4d4d4 69px 70px); }
.grid td.c { background: #fff; border-right: 1px solid #d4d4d4; border-bottom: 1px solid #d4d4d4; padding: 0 2px; line-height: 21px; white-space: nowrap; }
.grid td.num { text-align: right; }
.grid td.head { text-align: center; font-size: 14px; font-weight: 700; text-decoration: underline; }
.page-break { position: absolute; left: 658px; top: 21px; bottom: 0; width: 1px; background: #999; }
.rain { position: absolute; left: 60px; top: 291px; }
.rt { font: 12px "Liberation Sans", sans-serif; fill: #333; stroke: #333; stroke-width: .2; }
.rt-l { font-size: 15px; }
.vscroll { display: flex; flex-direction: column; width: 15px; margin: 2px 3px 0; }
.vscroll button { height: 15px; border: 1px solid #ababab; background: #fff; }
.vthumb { height: 27px; border: 1px solid #ababab; }
.vtrack { flex: 1; background: #f0f0f0; }

.sheetbar { display: flex; height: 27px; background: #f5f5f5; flex: none; font-size: 13px; }
.navs { display: flex; justify-content: space-around; width: 101px; padding: 0 28px 0 14px; border-right: 1px solid #ababab; height: 24px; margin-top: 1px; }
.stab { width: 149px; height: 24px; }
.stab.on { background: #fff; color: #217346; font-weight: 700; border: 1px solid #ababab; border-width: 0 1px; box-shadow: inset 0 -2px #217346; margin-top: -1px; height: 25px; width: 151px; }
.add { width: 82px; height: 26px; }
.dots.hd { margin: 8px 15px 0 auto; }
.hscroll { display: flex; width: 37%; height: 15px; margin: 6px 21px 0 0; }
.hscroll button { width: 15px; border: 1px solid #ababab; background: #fff; }
.hthumb { flex: 1; background: #fff; border: 1px solid #ababab; }
.htrack { width: 27px; background: #e8e8e8; }

.status { display: flex; align-items: center; height: 22px; background: #217346; color: #fff; padding-left: 7px; flex: none; font-size: 11px; }
.ready { width: 64px; }
.views { display: flex; height: 22px; margin: 0 4px 0 auto; }
.views button { width: 38px; height: 22px; }
.views .on { background: #0e6335; }
.zoom { display: flex; align-items: center; padding-right: 9px; }
.zm { width: 8px; height: 22px; background: linear-gradient(#fff, #fff) center / 6px 2px no-repeat; }
.zm.plus { background: linear-gradient(#fff, #fff) center / 8px 2px no-repeat, linear-gradient(#fff, #fff) center / 2px 8px no-repeat; }
.zoom input { appearance: none; width: 100px; height: 12px; margin: 0 4px 0 3px; background: linear-gradient(#fff, #fff) center / 100% 1px no-repeat; }
.zoom input::-webkit-slider-thumb { appearance: none; width: 4px; height: 11px; background: #fff; }
.pc { width: 42px; text-align: right; }

.taskbar { display: flex; justify-content: space-between; height: 40px; border-top: 1px solid #596567; background: linear-gradient(90deg, #05080c, #080d15 40%, #070d16 80%, #040608); flex: none; color: #fff; }
.apps { display: grid; grid-template-columns: 58px repeat(10, 62px); align-items: center; }
.apps button:first-child { padding-right: 4px; }
.apps button { height: 39px; }
.apps .active { width: 58px; height: 38px; border: 1px solid #b9bdbf; border-radius: 2px; background: linear-gradient(160deg, #b8babb, #8a8d8f 45%, #616567 50%, #8a8d8f); margin-left: 2px; }
.tray { display: flex; align-items: center; gap: 9px; font-size: 11px; }
.tray > svg { margin-top: 2px; }
.lang { margin: 0 8px 6px 0; }
.more { margin-right: 4px; }
.clock { display: grid; text-align: center; width: 76px; margin-right: -3px; }
.peek { width: 12px; height: 38px; border: 1px solid #555b60; background: linear-gradient(#4c5054, #111 60%); }
```
